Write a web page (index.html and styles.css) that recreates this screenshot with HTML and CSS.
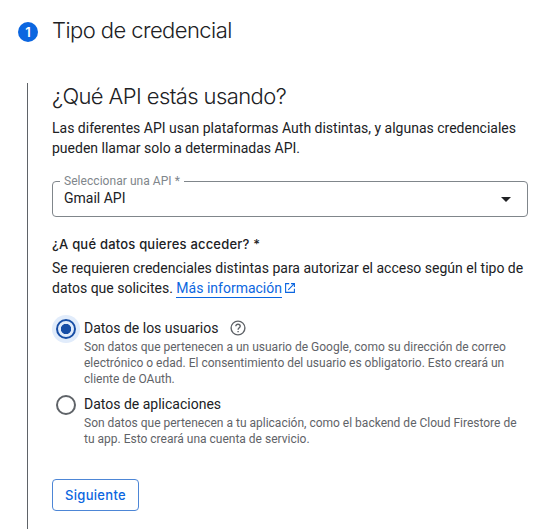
FILE: index.html
```html
<!DOCTYPE html>
<html lang="es">
<head>
<meta charset="utf-8">
<title>Tipo de credencial</title>
<link rel="stylesheet" href="styles.css">
</head>
<body>
<main class="stepper">
  <header class="step-header">
    <span class="step-number">1</span>
    <h1 class="step-title">Tipo de credencial</h1>
  </header>
  <section class="step-content">
    <h2 class="question">¿Qué API estás usando?</h2>
    <p class="text intro">Las diferentes API usan plataformas Auth distintas, y algunas credenciales<br>pueden llamar solo a determinadas API.</p>
    <div class="select">
      <span class="select-label">Seleccionar una API *</span>
      <span class="select-value">Gmail API</span>
      <svg class="arrow" width="10" height="5" viewBox="0 0 10 5"><path d="M0 0h10L5 5z" fill="#202124"/></svg>
    </div>
    <h3 class="subtitle">¿A qué datos quieres acceder? *</h3>
    <p class="text access">Se requieren credenciales distintas para autorizar el acceso según el tipo de<br>datos que solicites. <a class="link"><span class="link-text">Más información</span><svg class="external" width="10" height="10" viewBox="0 0 10 10" fill="none" stroke="#0b66e0" stroke-width="1.1"><path d="M4.2.6H.6v8.8h8.8V5.8M6 .6h3.4V4M9.3.7 3.2 6.8"/></svg></a></p>
    <div class="option first">
      <span class="radio checked"></span>
      <div class="option-body">
        <div class="option-label"><span>Datos de los usuarios</span><svg class="help" width="16" height="16" viewBox="0 0 16 16" fill="none" stroke="#5f6368" stroke-width="1.4"><circle cx="8" cy="8" r="6.9"/><path d="M5.8 6.3C5.8 4.9 6.7 4.2 8 4.2s2.2.8 2.2 2c0 1.6-2.1 1.7-2.1 3.6"/><path d="M8.1 10.9v1.4"/></svg></div>
        <p class="option-text">Son datos que pertenecen a un usuario de Google, como su dirección de correo<br>electrónico o edad. El consentimiento del usuario es obligatorio. Esto creará un<br>cliente de OAuth.</p>
      </div>
    </div>
    <div class="option">
      <span class="radio"></span>
      <div class="option-body">
        <div class="option-label"><span>Datos de aplicaciones</span></div>
        <p class="option-text">Son datos que pertenecen a tu aplicación, como el backend de Cloud Firestore de<br>tu app. Esto creará una cuenta de servicio.</p>
      </div>
    </div>
    <button class="next">Siguiente</button>
  </section>
</main>
</body>
</html>
```
FILE: styles.css
```css
* { box-sizing: border-box; }
body { margin: 0; background: #fff; color: #202124; font-family: Roboto, sans-serif; overflow: hidden; }
h1, h2, h3, p { margin: 0; }
.stepper { height: 529px; display: flex; flex-direction: column; }
.step-header { height: 83px; padding: 16px 0 0 18px; display: flex; align-items: flex-start; gap: 14px; }
.step-number { width: 20px; height: 20px; margin-top: 6px; border-radius: 50%; background: #0b66e0; color: #fff; font: 600 13px/20px Inter, sans-serif; text-align: center; }
.step-title, .question { font: 350 22px/28px Inter, sans-serif; letter-spacing: -.57px; white-space: nowrap; }
.question { letter-spacing: -.6px; margin-top: -1px; }
.step-content { flex: 1; margin-left: 27px; border-left: 1px solid #5f6368; padding-left: 24px; display: flex; flex-direction: column; align-items: flex-start; }
.text { font-size: 14px; line-height: 20px; white-space: nowrap; }
.intro { margin-top: 8px; }
.select { position: relative; width: 476px; height: 36px; margin-top: 23px; border: 1px solid #80868b; border-radius: 4px; padding: 0 16px 0 11px; display: flex; align-items: center; justify-content: space-between; }
.select-label { position: absolute; left: 7px; top: -9px; padding: 0 4px; background: #fff; color: #80868b; font-size: 12px; line-height: 16px; letter-spacing: .05px; white-space: nowrap; }
.select-value { font-size: 14px; line-height: 20px; margin-top: -2px; }
.subtitle { margin-top: 17px; font: 500 13px/20px Inter, sans-serif; letter-spacing: .2px; white-space: nowrap; }
.access { margin-top: 4px; }
.link { color: #0b66e0; }
.link-text { display: inline-block; height: 20px; border-bottom: 1px solid #0b66e0; }
.external { margin-left: 3px; }
.option { display: flex; }
.first { margin-top: 20px; }
.radio { width: 20px; height: 20px; margin: 1px 8px 0 4px; border: 2px solid #5f6368; border-radius: 50%; flex: none; }
.checked { border-color: #174ea6; background: radial-gradient(circle, #174ea6 4.8px, #e1ecfb 5.5px); box-shadow: 0 0 0 4px #e1ecfb; }
.option-label { display: flex; align-items: center; gap: 12px; font-size: 14px; line-height: 20px; }
.option-text { font-size: 12px; line-height: 16px; color: #5f6368; white-space: nowrap; padding: 1px 0 7px; }
.next { margin-top: 25px; width: 87px; height: 32px; padding: 0; border: 1px solid #4d86d6; border-radius: 4px; background: #fff; color: #0b66e0; font: 500 13px/20px Inter, sans-serif; letter-spacing: .3px; }
```
